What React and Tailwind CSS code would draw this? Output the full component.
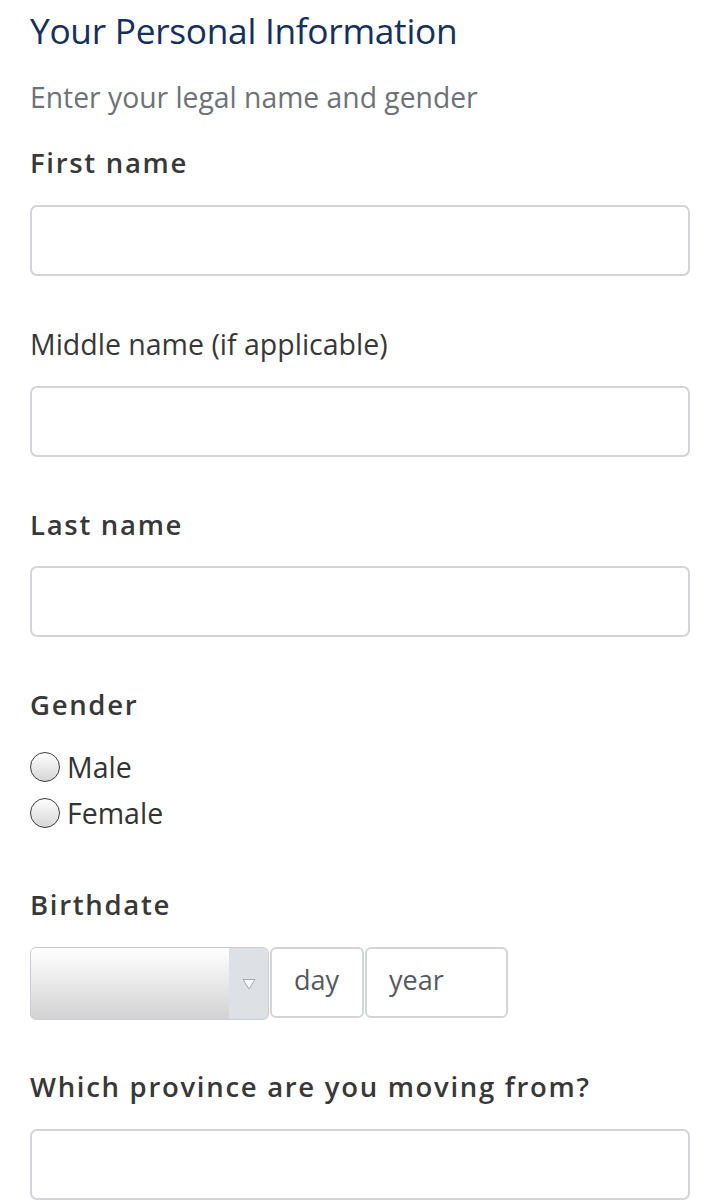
import React from "react";

function Label({ children, bold = true, className = "" }) {
  return (
    <div
      className={`h-10 leading-10 text-[#383838] ${
        bold ? "text-[27.5px] font-semibold tracking-[1.7px]" : "text-[28.5px] font-normal"
      } ${className}`}
    >
      {children}
    </div>
  );
}

function TextBox({ className = "" }) {
  return (
    <div
      className={`h-[71px] w-full rounded-[7px] border-2 border-[#d3d4d8] bg-white ${className}`}
    />
  );
}

function Radio({ label }) {
  return (
    <div className="flex h-8 items-center gap-[7px]">
      <span className="h-[30px] w-[30px] rounded-full border-[1.5px] border-[#3c3c3c] bg-gradient-to-b from-white to-[#d6d6d6]" />
      <span className="text-[28.5px] text-[#333]">{label}</span>
    </div>
  );
}

export default function App() {
  return (
    <div
      className="min-h-[1200px] w-[720px] overflow-hidden bg-white px-[30px]"
      style={{ fontFamily: '"Open Sans", "Noto Sans", sans-serif' }}
    >
      <h1 className="mt-[8px] h-11 leading-[44px] text-[35.3px] font-normal text-[#14305e] tracking-[-0.3px]">
        Your Personal Information
      </h1>
      <p className="mt-[25px] h-10 leading-10 text-[28.3px] text-[#6d7278]">
        Enter your legal name and gender
      </p>

      <Label className="mt-[26px]">First name</Label>
      <TextBox className="mt-[22px]" />

      <Label bold={false} className="mt-[48px]">
        Middle name (if applicable)
      </Label>
      <TextBox className="mt-[22px]" />

      <Label className="mt-[48px]">Last name</Label>
      <TextBox className="mt-[21px]" />

      <Label className="mt-[48px]">Gender</Label>
      <div className="mt-[26px] flex flex-col gap-[14px]">
        <Radio label="Male" />
        <Radio label="Female" />
      </div>

      <Label className="mt-[56px]">Birthdate</Label>
      <div className="mt-[22px] flex items-start gap-[1px]">
        <div className="flex h-[73px] w-[239px] overflow-hidden rounded-[6px] border border-[#c9ccd2] bg-gradient-to-b from-white to-[#d2d2d2]">
          <div className="flex-1" />
          <div className="flex w-[39px] items-center justify-center bg-[#dde0e5]">
            <svg width="14" height="12" viewBox="0 0 14 12">
              <path d="M1 1.5 L13 1.5 L7 11 Z" fill="#fbfbfc" stroke="#a3a8b0" strokeWidth="1" />
            </svg>
          </div>
        </div>
        <div className="flex h-[71px] w-[94px] items-center rounded-[6px] border-2 border-[#d3d4d8] pb-[4px] pl-[22px] text-[27px] text-[#555a60]">
          day
        </div>
        <div className="flex h-[71px] w-[143px] items-center rounded-[6px] border-2 border-[#d3d4d8] pb-[4px] pl-[22px] text-[27px] text-[#555a60]">
          year
        </div>
      </div>

      <Label className="mt-[47px]">Which province are you moving from?</Label>
      <TextBox className="mt-[22px]" />
    </div>
  );
}
